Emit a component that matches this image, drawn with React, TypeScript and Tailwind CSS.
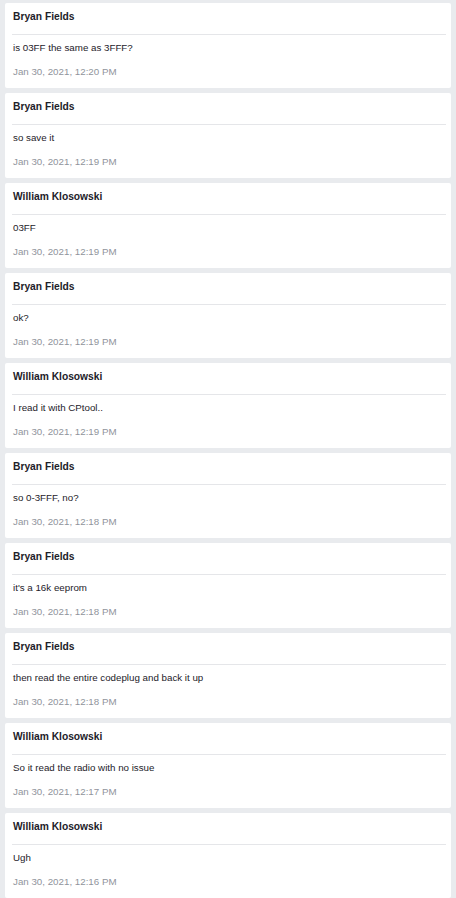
import React from "react";

const messages = [
  { name: "Bryan Fields", text: "is 03FF the same as 3FFF?", date: "Jan 30, 2021, 12:20 PM" },
  { name: "Bryan Fields", text: "so save it", date: "Jan 30, 2021, 12:19 PM" },
  { name: "William Klosowski", text: "03FF", date: "Jan 30, 2021, 12:19 PM" },
  { name: "Bryan Fields", text: "ok?", date: "Jan 30, 2021, 12:19 PM" },
  { name: "William Klosowski", text: "I read it with CPtool..", date: "Jan 30, 2021, 12:19 PM" },
  { name: "Bryan Fields", text: "so 0-3FFF, no?", date: "Jan 30, 2021, 12:18 PM" },
  { name: "Bryan Fields", text: "it's a 16k eeprom", date: "Jan 30, 2021, 12:18 PM" },
  { name: "Bryan Fields", text: "then read the entire codeplug and back it up", date: "Jan 30, 2021, 12:18 PM" },
  { name: "William Klosowski", text: "So it read the radio with no issue", date: "Jan 30, 2021, 12:17 PM" },
  { name: "William Klosowski", text: "Ugh", date: "Jan 30, 2021, 12:16 PM" },
];

const App = () => {
  return (
    <div
      className="w-[456px] h-[898px] overflow-hidden bg-[#e9ebee] pt-[3px] px-[5px] flex flex-col gap-[5px]"
      style={{ fontFamily: '"Liberation Sans", Arial, sans-serif' }}
    >
      {messages.map((m, i) => (
        <div key={i} className="bg-white rounded-[2px] h-[85px] shrink-0 flex flex-col">
          <p className="pt-[7px] pl-[8px] text-[10.25px] leading-[14px] font-bold text-[#1d2129]">{m.name}</p>
          <div className="mt-[10px] ml-[7px] mr-[5px] h-px bg-[#e5e6e9]" />
          <p className="mt-[6px] pl-[8px] text-[9.75px] leading-[14px] text-[#1d2129]">{m.text}</p>
          <p className="mt-[10px] pl-[8px] text-[9.75px] leading-[14px] text-[#90949c]">{m.date}</p>
        </div>
      ))}
    </div>
  );
};

export default App;
